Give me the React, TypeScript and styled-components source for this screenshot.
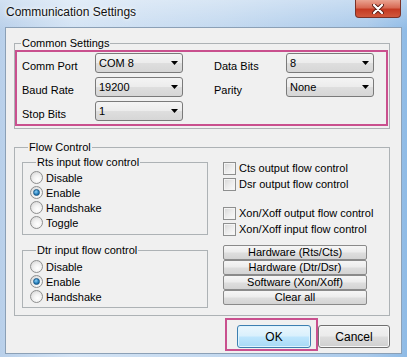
import styled, { createGlobalStyle } from "styled-components";

const Global = createGlobalStyle`
  html, body { margin: 0; padding: 0; }
  body {
    font-family: "Liberation Sans", Arial, sans-serif;
    font-size: 11px;
    color: #000;
  }
`;

const Frame = styled.div`
  width: 407px;
  height: 357px;
  box-sizing: border-box;
  display: flex;
  flex-direction: column;
  padding: 0 5px 3px 5px;
  background: linear-gradient(180deg, rgba(255, 255, 255, 0.35), rgba(255, 255, 255, 0) 30px),
    linear-gradient(90deg, #b9d0ea 0%, #d3e3f4 18%, #c2d8ef 55%, #a9c9ea 90%, #8fbbe6 100%);
`;

const TitleBar = styled.div`
  height: 27px;
  flex-shrink: 0;
  display: flex;
  justify-content: space-between;
  align-items: flex-start;
`;

const Title = styled.div`
  padding: 5px 0 0 1px;
  font-size: 12px;
  line-height: 15px;
  color: #111;
  text-shadow: 0 0 6px #fff, 0 0 3px #fff;
`;

const CloseButton = styled.div`
  width: 46px;
  height: 18px;
  margin-right: 1px;
  box-sizing: border-box;
  border: 1px solid #7a3127;
  border-top: none;
  border-radius: 0 0 4px 4px;
  background: linear-gradient(180deg, #eaa391 0%, #d86a54 45%, #c53a22 55%, #d0583c 100%);
  display: flex;
  align-items: center;
  justify-content: center;
`;

const Client = styled.div`
  flex: 1;
  background: #f0f0f0;
  border: 1px solid #8ba0b6;
  padding: 9px 11px 0 8px;
  display: flex;
  flex-direction: column;
`;

const Group = styled.fieldset<{ $pad: string; $top?: number }>`
  margin: ${(p) => p.$top ?? 0}px 0 0 0;
  padding: ${(p) => p.$pad};
  border: 1px solid #adb2b5;
  min-width: 0;
`;

const Legend = styled.legend`
  padding: 0 1px;
  margin-left: 6px;
  line-height: 13px;
  font-size: 11px;
`;

const Highlight = styled.div`
  border: 2px solid #c9508e;
`;

const SettingsGrid = styled.div`
  display: grid;
  grid-template-columns: 73px 88px 31px 72px 88px;
  grid-auto-rows: 20px;
  row-gap: 4px;
  padding: 1px 0 3px 5px;
`;

const FieldLabel = styled.div<{ $col: number }>`
  grid-column: ${(p) => p.$col};
  padding-top: 7px;
  line-height: 13px;
`;

const Combo = styled.div`
  box-sizing: border-box;
  height: 20px;
  border: 1px solid #7a7a7a;
  border-radius: 3px;
  background: linear-gradient(180deg, #f4f4f4 0%, #ececec 48%, #dedede 52%, #d6d6d6 100%);
  display: flex;
  align-items: center;
  justify-content: space-between;
  padding: 0 4px 0 3px;
  font-size: 11px;
`;

const FlowBody = styled.div`
  display: flex;
  gap: 15px;
`;

const LeftColumn = styled.div`
  width: 186px;
  margin-top: 2px;
  display: flex;
  flex-direction: column;
`;

const RightColumn = styled.div`
  margin-top: 6px;
  display: flex;
  flex-direction: column;
  width: 144px;
`;

const OptionRow = styled.div<{ $h: number }>`
  height: ${(p) => p.$h}px;
  display: flex;
  align-items: center;
  gap: 3px;
  font-size: 11px;
  white-space: nowrap;
`;

const RadioDot = styled.span<{ $checked?: boolean }>`
  width: 13px;
  height: 13px;
  box-sizing: border-box;
  border-radius: 50%;
  border: 1px solid #8e8f8f;
  background: radial-gradient(circle at 60% 65%, #ffffff 0%, #f2f2f2 40%, #cfcfcf 100%);
  display: flex;
  align-items: center;
  justify-content: center;
  flex-shrink: 0;
  &::after {
    content: "";
    display: ${(p) => (p.$checked ? "block" : "none")};
    width: 5px;
    height: 5px;
    border-radius: 50%;
    background: radial-gradient(circle at 40% 35%, #8fd0f5 0%, #2a83c0 55%, #0d4f80 100%);
    border: 1px solid #1c5a88;
  }
`;

const CheckBox = styled.span`
  width: 13px;
  height: 13px;
  box-sizing: border-box;
  border: 1px solid #8e8f8f;
  background: linear-gradient(135deg, #d6d6d6 0%, #ececec 50%, #fafafa 100%);
  box-shadow: inset 0 0 0 1px #f4f4f4;
  flex-shrink: 0;
`;

const Spacer = styled.div<{ $h: number }>`
  height: ${(p) => p.$h}px;
  flex-shrink: 0;
`;

const ButtonStack = styled.div`
  display: flex;
  flex-direction: column;
`;

const StackButton = styled.div`
  height: 15px;
  box-sizing: border-box;
  border: 1px solid #8a8a8a;
  border-radius: 2px;
  background: linear-gradient(180deg, #f6f6f6 0%, #ececec 48%, #dedede 52%, #d4d4d4 100%);
  font-size: 11px;
  line-height: 13px;
  text-align: center;
`;

const FooterRow = styled.div`
  display: flex;
  justify-content: flex-end;
  align-items: flex-start;
  margin-top: 2px;
`;

const Mark = styled.div`
  border: 2px solid #c9508e;
  padding: 5px 5px 1px 10px;
`;

const DialogButton = styled.div<{ $default?: boolean; $w: number }>`
  width: ${(p) => p.$w}px;
  height: 23px;
  box-sizing: border-box;
  border: 1px solid ${(p) => (p.$default ? "#3c7fb1" : "#707070")};
  border-radius: 3px;
  background: ${(p) =>
    p.$default
      ? "linear-gradient(180deg, #eaf6fd 0%, #d9f0fc 48%, #bee6fd 52%, #a7d9f5 100%)"
      : "linear-gradient(180deg, #f2f2f2 0%, #ebebeb 48%, #dddddd 52%, #cfcfcf 100%)"};
  box-shadow: inset 0 0 0 1px ${(p) => (p.$default ? "#dff3fd" : "#f8f8f8")};
  display: flex;
  align-items: center;
  justify-content: center;
  font-size: 12px;
`;

const CancelSlot = styled.div`
  margin-top: 7px;
`;

function Arrow() {
  return (
    <svg width="7" height="4" viewBox="0 0 7 4">
      <polygon points="0,0 7,0 3.5,4" fill="#000" />
    </svg>
  );
}

function Radio({ label, checked }: { label: string; checked?: boolean }) {
  return (
    <OptionRow $h={15}>
      <RadioDot $checked={checked} />
      {label}
    </OptionRow>
  );
}

function Check({ label }: { label: string }) {
  return (
    <OptionRow $h={16}>
      <CheckBox />
      {label}
    </OptionRow>
  );
}

export default function App() {
  return (
    <>
      <Global />
      <Frame>
        <TitleBar>
          <Title>Communication Settings</Title>
          <CloseButton>
            <svg width="12" height="10" viewBox="0 0 12 10">
              <path d="M2 1 L10 9 M10 1 L2 9" stroke="#5a1e16" strokeWidth="4" strokeLinecap="round" />
              <path d="M2 1 L10 9 M10 1 L2 9" stroke="#fff" strokeWidth="2.2" strokeLinecap="round" />
            </svg>
          </CloseButton>
        </TitleBar>
        <Client>
          <Group $pad="0 1px 2px 0">
            <Legend>Common Settings</Legend>
            <Highlight>
              <SettingsGrid>
                <FieldLabel $col={1}>Comm Port</FieldLabel>
                <Combo>
                  COM 8 <Arrow />
                </Combo>
                <FieldLabel $col={4}>Data Bits</FieldLabel>
                <Combo>
                  8 <Arrow />
                </Combo>
                <FieldLabel $col={1}>Baud Rate</FieldLabel>
                <Combo>
                  19200 <Arrow />
                </Combo>
                <FieldLabel $col={4}>Parity</FieldLabel>
                <Combo>
                  None <Arrow />
                </Combo>
                <FieldLabel $col={1}>Stop Bits</FieldLabel>
                <Combo>
                  1 <Arrow />
                </Combo>
              </SettingsGrid>
            </Highlight>
          </Group>

          <Group $pad="0 0 7px 7px" $top={12}>
            <Legend>Flow Control</Legend>
            <FlowBody>
              <LeftColumn>
                <Group $pad="1px 0 4px 7px">
                  <Legend>Rts input flow control</Legend>
                  <Radio label="Disable" />
                  <Radio label="Enable" checked />
                  <Radio label="Handshake" />
                  <Radio label="Toggle" />
                </Group>
                <Group $pad="2px 0 3px 7px" $top={9}>
                  <Legend>Dtr input flow control</Legend>
                  <Radio label="Disable" />
                  <Radio label="Enable" checked />
                  <Radio label="Handshake" />
                </Group>
              </LeftColumn>
              <RightColumn>
                <Check label="Cts output flow control" />
                <Check label="Dsr output flow control" />
                <Spacer $h={13} />
                <Check label="Xon/Xoff output flow control" />
                <Check label="Xon/Xoff input flow control" />
                <Spacer $h={8} />
                <ButtonStack>
                  <StackButton>Hardware (Rts/Cts)</StackButton>
                  <StackButton>Hardware (Dtr/Dsr)</StackButton>
                  <StackButton>Software (Xon/Xoff)</StackButton>
                  <StackButton>Clear all</StackButton>
                </ButtonStack>
              </RightColumn>
            </FlowBody>
          </Group>

          <FooterRow>
            <Mark>
              <DialogButton $default $w={74}>
                OK
              </DialogButton>
            </Mark>
            <CancelSlot>
              <DialogButton $w={72}>Cancel</DialogButton>
            </CancelSlot>
          </FooterRow>
        </Client>
      </Frame>
    </>
  );
}
